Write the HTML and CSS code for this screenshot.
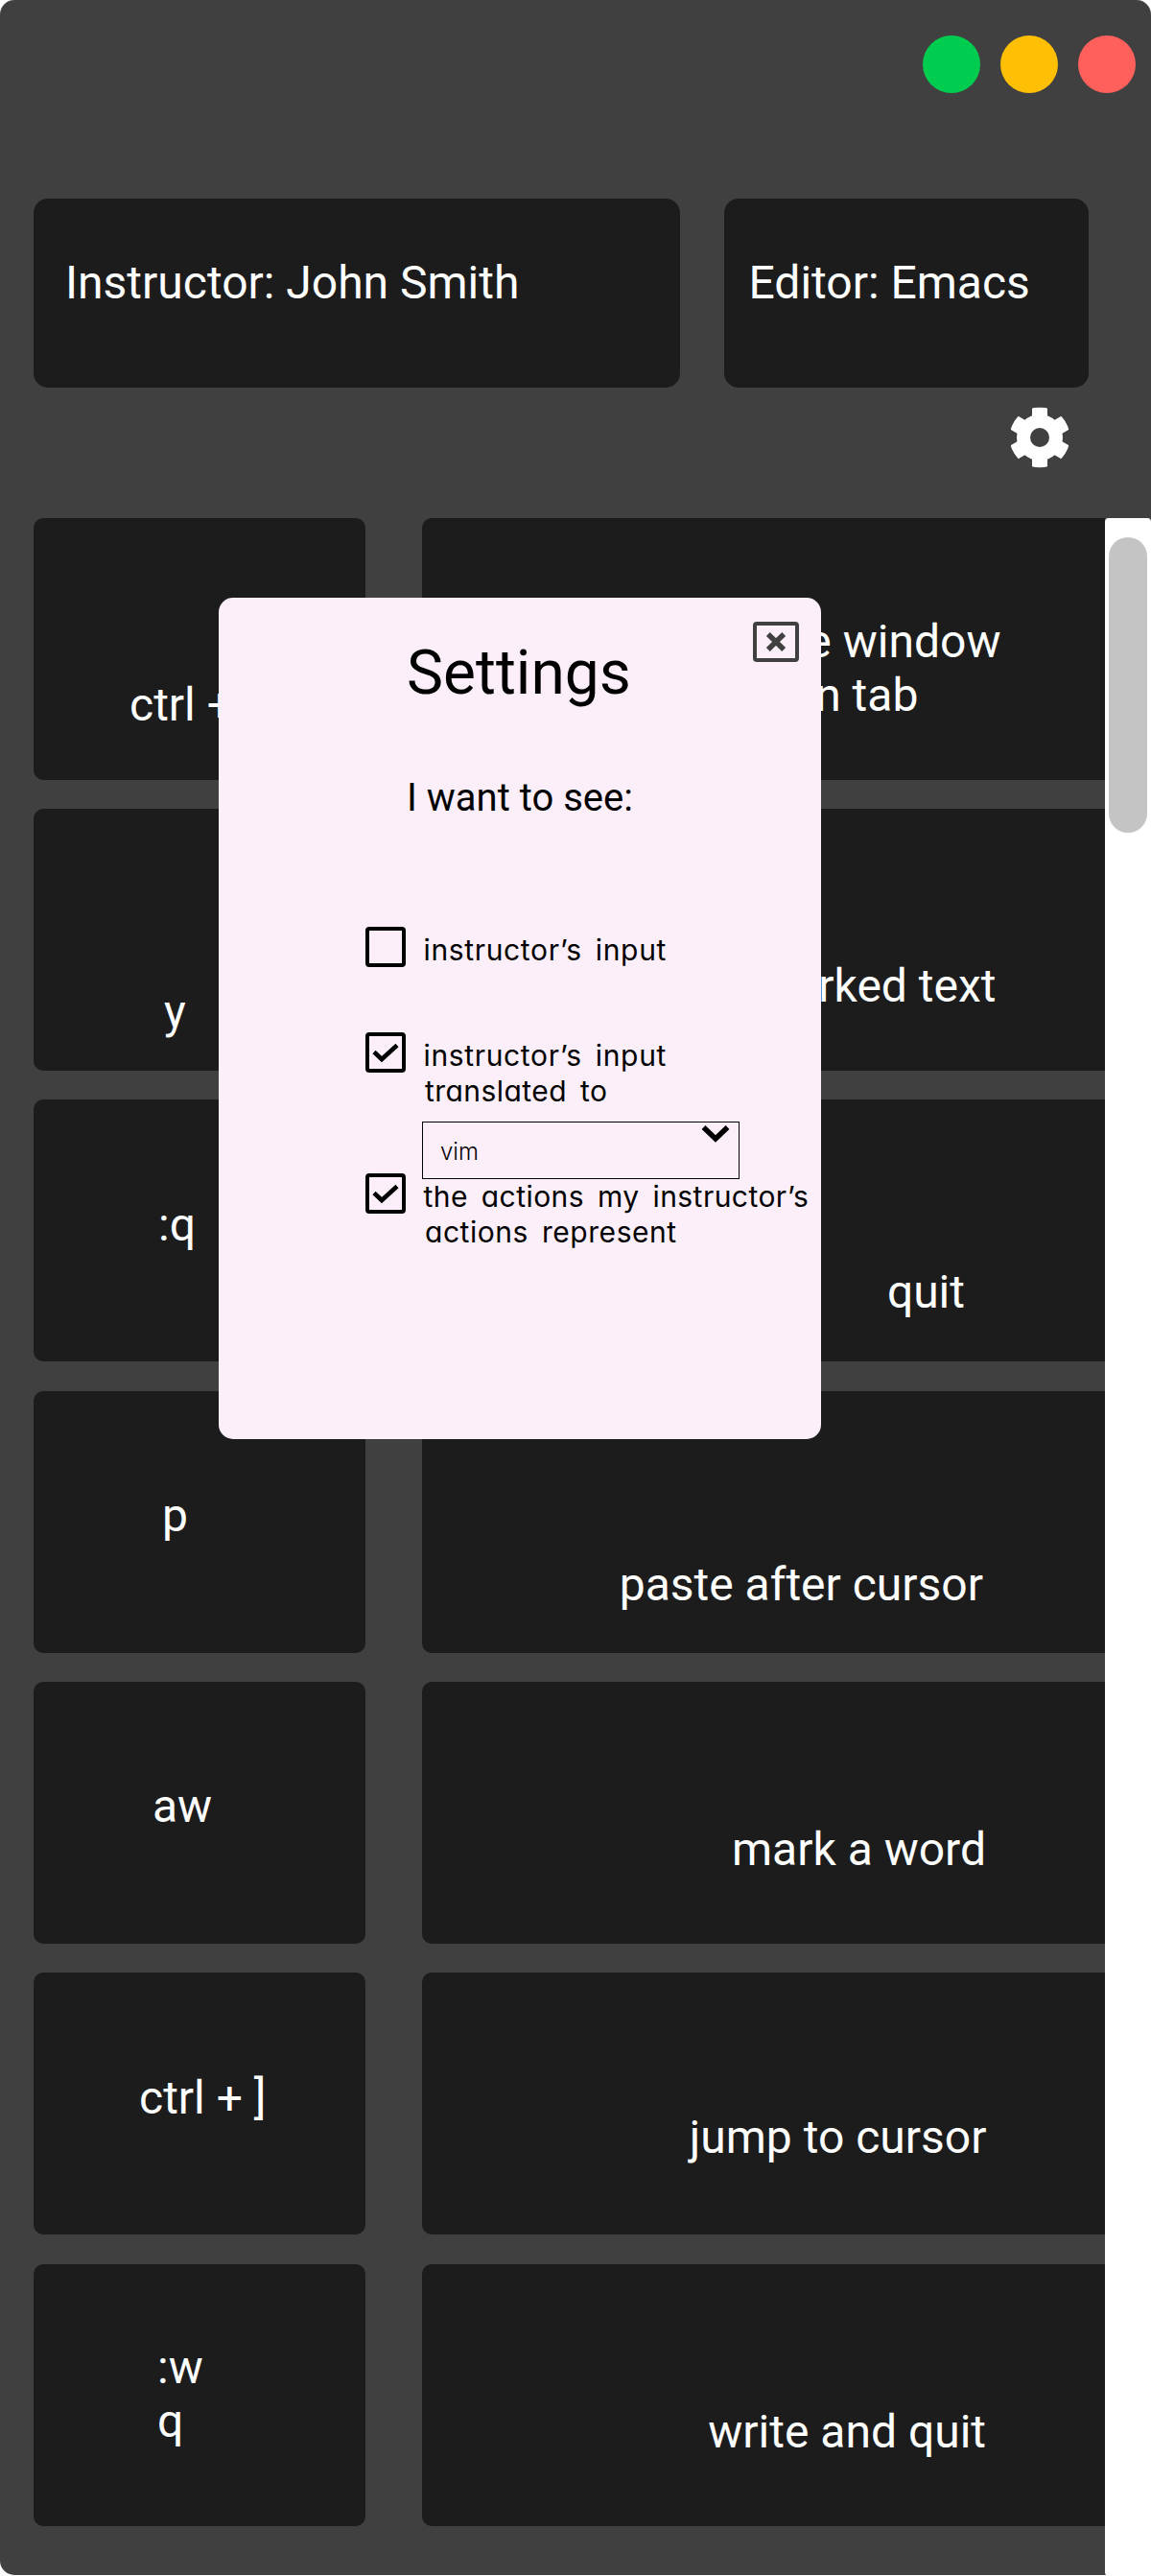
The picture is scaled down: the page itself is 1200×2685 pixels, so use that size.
FILE: index.html
```html
<!DOCTYPE html>
<html lang="en">
<head>
<meta charset="utf-8">
<title>Instructor input</title>
<link rel="stylesheet" href="styles.css">
</head>
<body>
<main class="window">
  <div class="titlebar">
    <span class="dot dot-green"></span>
    <span class="dot dot-yellow"></span>
    <span class="dot dot-red"></span>
  </div>
  <header class="info">
    <div class="card instructor">Instructor: John Smith</div>
    <div class="card editor">Editor: Emacs</div>
  </header>
  <div class="toolbar">
    <svg class="gear" viewBox="-32 -32 64 64" aria-label="Settings">
      <clipPath id="rim"><circle r="31.5"/></clipPath>
      <g fill="#fff" clip-path="url(#rim)">
        <path fill-rule="evenodd" d="M-24 0a24 24 0 1 0 48 0a24 24 0 1 0-48 0ZM-10 0a10 10 0 1 0 20 0a10 10 0 1 0-20 0Z"/>
        <g id="teeth"><rect x="-8" y="-31.5" width="16" height="15" rx="1.5"/><rect x="-8" y="16.5" width="16" height="15" rx="1.5"/></g>
        <use href="#teeth" transform="rotate(60)"/>
        <use href="#teeth" transform="rotate(120)"/>
      </g>
    </svg>
  </div>
  <section class="log">
    <div class="rows">
      <div class="key k1">ctrl + w</div><div class="action a1"><span class="centered">close window<br>in tab</span></div>
      <div class="key k2">y</div><div class="action a2">copy marked text</div>
      <div class="key k3">:q</div><div class="action a3">quit</div>
      <div class="key k4">p</div><div class="action a4">paste after cursor</div>
      <div class="key k5">aw</div><div class="action a5">mark a word</div>
      <div class="key k6">ctrl + ]</div><div class="action a6">jump to cursor</div>
      <div class="key k7">:w<br>q</div><div class="action a7">write and quit</div>
    </div>
    <div class="scrollbar"><div class="thumb"></div></div>
  </section>

  <div class="modal">
    <svg class="close" viewBox="0 0 48 42" fill="none" stroke="#404040" aria-label="Close">
      <rect x="2" y="2" width="44" height="38" rx="2" stroke-width="4"/>
      <path d="M15.800 13L32.200 29M32.200 13L15.800 29" stroke-width="5.500"/>
    </svg>
    <h1 class="title">Settings</h1>
    <p class="lead">I want to see:</p>
    <div class="option o1">
      <span class="box"></span>
      <div class="label"><span class="l-input">instructor’s input</span></div>
    </div>
    <div class="option o2">
      <span class="box"><svg class="check" viewBox="0 0 42 42"><path d="M9 20.500l8 7.500L33 13.500" fill="none" stroke="#000" stroke-width="4.600"/></svg></span>
      <div class="label"><span class="l-input">instructor’s input</span><span class="l-trans">translated to</span></div>
    </div>
    <div class="select">vim
      <svg class="chevron" viewBox="0 0 30 19"><path d="M2.500 3L15 15L27.500 3" fill="none" stroke="#000" stroke-width="5.500"/></svg>
    </div>
    <div class="option o3">
      <span class="box"><svg class="check" viewBox="0 0 42 42"><path d="M9 20.500l8 7.500L33 13.500" fill="none" stroke="#000" stroke-width="4.600"/></svg></span>
      <div class="label"><span class="l-act">the actions my instructor’s</span><span class="l-rep">actions represent</span></div>
    </div>
  </div>
</main>
</body>
</html>
```
FILE: styles.css
```css
* { box-sizing: border-box; }
body { margin: 0; background: #fff; font-family: Roboto, sans-serif; }
.window {
  position: relative;
  width: 1200px;
  height: 2684.400px;
  background: #404040;
  border-radius: 15px;
  color: #fff;
  font-size: 48px;
  line-height: 56.25px;
}
.titlebar { display: flex; justify-content: flex-end; gap: 21px; padding: 37px 16px 0 0; height: 206.670px; }
.dot { width: 60px; height: 60px; border-radius: 50%; }
.dot-green { background: #00cd50; }
.dot-yellow { background: #ffbf05; }
.dot-red { background: #ff605c; }

.info { display: flex; gap: 46.500px; padding-left: 35px; }
.card { height: 197.330px; padding-top: 60px; border-radius: 15px; background: #1c1c1c; white-space: nowrap; }
.instructor { width: 673.500px; padding-left: 33px; }
.editor { width: 380px; padding-left: 25.500px; }

.toolbar { height: 135.670px; padding: 20px 84px 0 0; display: flex; justify-content: flex-end; }
.gear { width: 64px; height: 64px; }

.log { display: flex; height: 2145px; }
.rows {
  display: grid;
  grid-template-columns: 346px 712px;
  grid-auto-rows: 273px;
  gap: 30.330px 59px;
  padding-left: 35px;
}
.key { background: #1c1c1c; border-radius: 10px; white-space: nowrap; }
.action { background: #1c1c1c; border-radius: 10px 0 0 10px; text-align: right; white-space: nowrap; }
.centered { display: inline-block; text-align: center; }
.k1 { padding: 167.500px 0 0 100px; }
.k2 { padding: 184px 0 0 136px; }
.k3 { padding: 102.500px 0 0 130px; }
.k4 { padding: 102.500px 0 0 134px; }
.k5 { padding: 102.500px 0 0 124px; }
.k6 { padding: 102.500px 0 0 110px; }
.k7 { padding: 80.500px 0 0 129px; }
.a1 { padding: 101.500px 108.500px 0 0; }
.a2 { padding: 157.500px 113.500px 0 0; }
.a3 { padding: 172.500px 146px 0 0; }
.a4 { padding: 174.500px 127px 0 0; }
.a5 { padding: 147.500px 124px 0 0; }
.a6 { padding: 143.500px 123.500px 0 0; }
.a7 { padding: 147.500px 124px 0 0; }

.scrollbar { width: 48px; height: 2145.400px; padding: 20.500px 4px 0; background: #fff; border-radius: 4px; }
.thumb { height: 308px; border-radius: 20px; background: #c4c4c4; }

/* settings dialog, laid over the log */
.modal {
  position: absolute;
  left: 228px;
  top: 623px;
  width: 628px;
  height: 877px;
  border-radius: 15px;
  background: #fceff9;
  color: #000;
}
.close { position: absolute; left: 557px; top: 25px; width: 48px; height: 42px; }
.title { margin: 0; padding: 41px 0 0 196px; font-size: 64px; line-height: 75px; font-weight: 400; }
.lead { margin: 0; padding: 69px 0 0 196px; font-size: 40px; line-height: 47px; }
.option { display: flex; gap: 18.500px; padding-left: 153px; font-family: Inter, sans-serif; font-size: 30px; line-height: 37px; font-feature-settings: "cv11"; }
.o1 { margin-top: 111px; height: 110px; }
.o2 { height: 93px; }
.o3 { margin-top: -6px; }
.box { flex: none; width: 42px; height: 42px; border: 4px solid #000; border-radius: 4px; }
.check { display: block; width: 42px; height: 42px; margin: -4px; }
.label { display: flex; flex-direction: column; padding-top: 6px; white-space: nowrap; word-spacing: 5px; }
.l-input { letter-spacing: .65px; }
.l-trans { padding-left: 1.500px; letter-spacing: .45px; }
.l-act { letter-spacing: .45px; }
.l-rep { padding-left: 1.500px; letter-spacing: .55px; }
.select {
  position: relative;
  width: 331px;
  height: 60px;
  margin-left: 212px;
  padding: 15px 0 0 18px;
  border: 1px solid #000;
  font-family: Inter, sans-serif;
  font-size: 24px;
  font-weight: 300;
  line-height: 32px;
}
.chevron { position: absolute; left: 290px; top: 2px; width: 30px; height: 19px; }
```
